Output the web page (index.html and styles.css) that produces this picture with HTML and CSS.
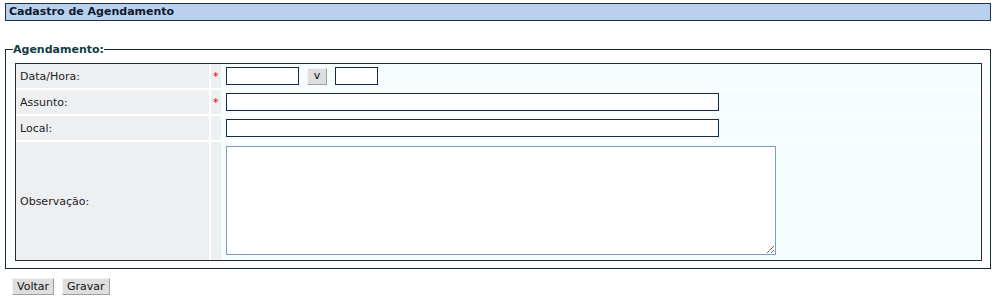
FILE: index.html
```
<!doctype html>
<html lang="pt-br">
  <head>
    <meta charset="utf-8">
    <title>Cadastro de Agendamento</title>
    <link rel="stylesheet" href="styles.css">
  </head>
  <body>
    <div class="titlebar">Cadastro de Agendamento</div>

    <fieldset class="box">
      <legend>Agendamento:</legend>
      <table class="form">
        <tr>
          <td class="lbl">Data/Hora:</td>
          <td class="req">*</td>
          <td class="fld">
            <div class="linha">
              <input type="text" class="inp data">
              <button type="button" class="btn cal">v</button>
              <input type="text" class="inp hora">
            </div>
          </td>
        </tr>
        <tr>
          <td class="lbl">Assunto:</td>
          <td class="req">*</td>
          <td class="fld"><input type="text" class="inp longo"></td>
        </tr>
        <tr>
          <td class="lbl">Local:</td>
          <td class="req"></td>
          <td class="fld"><input type="text" class="inp longo"></td>
        </tr>
        <tr class="last">
          <td class="lbl">Observação:</td>
          <td class="req"></td>
          <td class="fld area"><textarea class="obs"></textarea></td>
        </tr>
      </table>
    </fieldset>

    <div class="actions">
      <button type="button" class="btn">Voltar</button>
      <button type="button" class="btn">Gravar</button>
    </div>
  </body>
</html>
```

FILE: styles.css
```
html, body
{
	margin: 0;
	padding: 0;
	background: #ffffff;
}

body
{
	padding: 3px 5px 0 5px;
	font-family: "DejaVu Sans", Verdana, sans-serif;
	font-size: 11px;
	color: #1a1a1a;
}

.titlebar
{
	height: 16px;
	line-height: 16px;
	border: 1px solid #1c2f4c;
	background-color: #b9d1ee;
	padding-left: 3px;
	font-weight: bold;
	color: #0c1a2e;
}

.box
{
	margin: 22px 0 0 0;
	padding: 7px 8px 7px 9px;
	border: 1px solid #0d2e36;
	min-width: 0;
}

.box legend
{
	padding: 0;
	margin-left: -2px;
	font-weight: bold;
	color: #123c40;
	line-height: 13px;
}

.form
{
	width: 100%;
	border: 1px solid #1d2b45;
	border-collapse: separate;
	border-spacing: 0;
	background-color: #f6fdff;
}

.form td
{
	height: 24px;
	padding: 0;
	border-bottom: 2px solid #ffffff;
	vertical-align: middle;
}

.form tr.last td
{
	border-bottom: 0;
}

.form td.lbl
{
	width: 189px;
	padding-left: 4px;
	background-color: #eeeff1;
	border-right: 2px solid #ffffff;
	color: #222222;
}

.form td.req
{
	width: 8px;
	padding-left: 2px;
	background-color: #eeeff1;
	color: #e00000;
	vertical-align: top;
	padding-top: 6px;
	height: 18px;
}

.form td.fld
{
	padding-left: 5px;
	border-bottom-color: #fbfeff;
}

.form td.area
{
	padding-top: 4px;
	padding-bottom: 5px;
}

.linha
{
	display: flex;
	align-items: center;
	gap: 8px;
}

.inp
{
	box-sizing: border-box;
	height: 18px;
	margin: 0;
	padding: 0 2px;
	border: 1px solid #152a48;
	background: #ffffff;
	font-family: inherit;
	font-size: 11px;
	vertical-align: middle;
}

.data
{
	width: 73px;
}

.hora
{
	width: 43px;
}

.longo
{
	width: 493px;
}

.obs
{
	display: block;
	box-sizing: border-box;
	width: 550px;
	height: 109px;
	margin: 0;
	border: 1px solid #7f9db9;
	background: #ffffff;
	font-family: inherit;
	font-size: 11px;
}

.btn
{
	box-sizing: border-box;
	height: 17px;
	margin: 0;
	padding: 0 4px;
	border: 1px solid;
	border-color: #f4f4f4 #a0a0a0 #a0a0a0 #f4f4f4;
	background-color: #dedede;
	font-family: inherit;
	font-size: 11px;
	line-height: 14px;
	color: #111111;
	vertical-align: middle;
}

.cal
{
	width: 20px;
	padding: 0;
}

.actions
{
	display: flex;
	gap: 8px;
	margin: 9px 0 0 7px;
}
```
